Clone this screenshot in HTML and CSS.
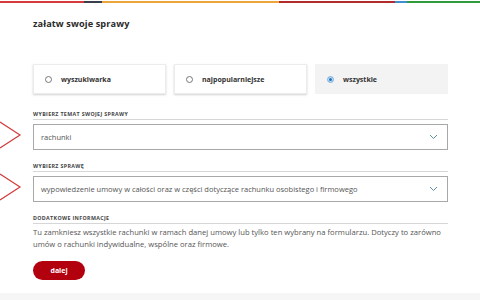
FILE: index.html
```html
<!DOCTYPE html>
<html lang="pl">
<head>
<meta charset="utf-8">
<link rel="stylesheet" href="styles.css">
</head>
<body>
<div class="topbar">
  <span class="seg s1"></span><span class="seg s2"></span><span class="seg s3"></span><span class="seg s4"></span><span class="seg s5"></span><span class="seg s6"></span>
</div>
<main class="page">
  <h1 class="title">załatw swoje sprawy</h1>
  <div class="tabs">
    <label class="tab"><span class="radio"></span>wyszukiwarka</label>
    <label class="tab"><span class="radio"></span>najpopularniejsze</label>
    <label class="tab active"><span class="radio on"></span>wszystkie</label>
  </div>
  <section class="field first">
    <svg class="pointer" width="22" height="28" viewBox="0 0 22 28"><path d="M0 1 L20 14 L0 27" fill="none" stroke="#d23a3a" stroke-width="1.2"/></svg>
    <div class="label">WYBIERZ TEMAT SWOJEJ SPRAWY</div>
    <div class="select"><span>rachunki</span><svg class="chev" width="9" height="6" viewBox="0 0 9 6"><path d="M1 1 L4.5 4.5 L8 1" fill="none" stroke="#5c8fa0" stroke-width="1"/></svg></div>
  </section>
  <section class="field">
    <svg class="pointer" width="22" height="28" viewBox="0 0 22 28"><path d="M0 1 L20 14 L0 27" fill="none" stroke="#d23a3a" stroke-width="1.2"/></svg>
    <div class="label">WYBIERZ SPRAWĘ</div>
    <div class="select"><span>wypowiedzenie umowy w całości oraz w części dotyczące rachunku osobistego i firmowego</span><svg class="chev" width="9" height="6" viewBox="0 0 9 6"><path d="M1 1 L4.5 4.5 L8 1" fill="none" stroke="#5c8fa0" stroke-width="1"/></svg></div>
  </section>
  <section class="field info">
    <div class="label">DODATKOWE INFORMACJE</div>
    <p class="desc">Tu zamkniesz wszystkie rachunki w ramach danej umowy lub tylko ten wybrany na formularzu. Dotyczy to zarówno umów o rachunki indywidualne, wspólne oraz firmowe.</p>
  </section>
  <button class="btn">dalej</button>
</main>
<div class="footer"></div>
</body>
</html>
```
FILE: styles.css
```css
* { box-sizing: border-box; }
html, body { margin: 0; padding: 0; background: #fff; }
body { font-family: "Open Sans", "Liberation Sans", sans-serif; color: #333; width: 480px; height: 300px; overflow: hidden; position: relative; }
.topbar { display: flex; height: 3px; padding-top: 1px; }
.seg { display: block; height: 2px; }
.s1 { width: 84px; background: #d63b3b; }
.s2 { width: 18px; background: #3b3f4a; }
.s3 { width: 177px; background: #eba53a; }
.s4 { width: 116px; background: #b32a2a; }
.s5 { width: 12px; background: #3f8fd0; }
.s6 { flex: 1; background: #2f9b3e; }
.page { width: 415px; margin-left: 33px; }
.title { font-size: 9.2px; font-weight: 700; margin: 15px 0 0; height: 12px; line-height: 12px; color: #2a2a2a; letter-spacing: 0.1px; }
.tabs { display: flex; gap: 8px; margin-top: 34px; }
.tab { flex: 1; height: 30px; display: flex; align-items: center; padding-left: 11px; font-size: 7px; font-weight: 700; color: #333; background: #fff; box-shadow: 0 1px 2px rgba(0,0,0,0.18); border: 1px solid #ececec; }
.tab.active { background: #f3f3f3; box-shadow: none; border-color: #f3f3f3; }
.radio { width: 7px; height: 7px; border-radius: 50%; border: 1px solid #777; margin-right: 9px; background: #fff; }
.radio.on { border-color: #9cc4e8; background: #1f6fc2; box-shadow: inset 0 0 0 1px #cfe3f5; }
.field { position: relative; margin-top: 13px; }
.field.first { margin-top: 17px; }
.label { font-size: 5.3px; font-weight: 700; color: #444; letter-spacing: 0.35px; padding-bottom: 2px; border-bottom: 1px solid #d6d6d6; line-height: 6px; }
.select { margin-top: 4px; height: 26px; border: 1px solid #a8a8a8; display: flex; align-items: center; justify-content: space-between; padding: 0 9px 0 7px; font-size: 7.5px; color: #555; }
.chev { flex: none; }
.pointer { position: absolute; left: -33px; top: 10px; }
.desc { margin: 2px 0 0; font-size: 7.65px; line-height: 12px; color: #555; }
.btn { margin-top: 11px; width: 52px; height: 19px; border-radius: 10px; border: 0; background: #b3000f; color: #fff; font-family: inherit; font-size: 7px; font-weight: 700; padding: 0; display: block; }
.footer { position: absolute; left: 0; right: 0; bottom: 0; height: 7px; background: #f6f6f6; }
```
